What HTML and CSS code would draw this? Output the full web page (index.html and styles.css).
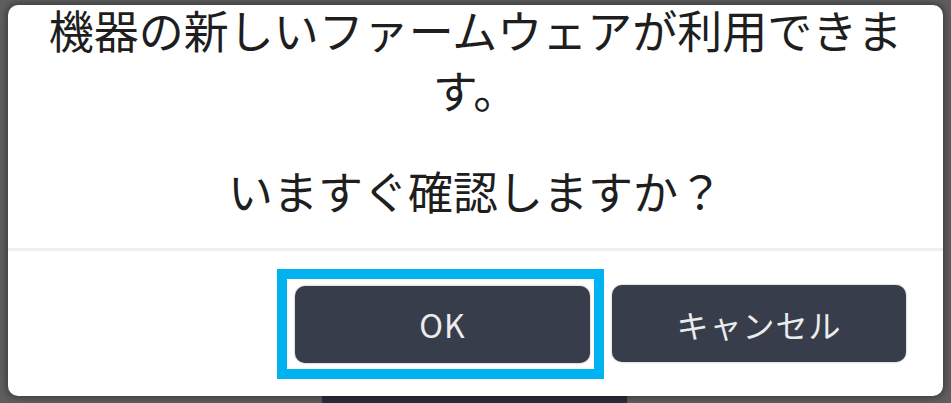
FILE: index.html
```html
<!DOCTYPE html>
<html lang="ja">
<head>
  <meta charset="UTF-8" />
  <meta name="viewport" content="width=device-width, initial-scale=1.0" />
  <title>ファームウェア更新</title>
  <link rel="stylesheet" href="styles.css">
</head>
<body>
  <div class="under"></div>

  <div class="dialog">
    <div class="msg">
      <p>機器の新しいファームウェアが利用できます。</p>
      <p class="ask">いますぐ確認しますか？</p>
    </div>
    <div class="actions">
      <span class="focus"><button class="btn">OK</button></span>
      <button class="btn">キャンセル</button>
    </div>
  </div>
</body>
</html>
```

FILE: styles.css
```css
*{box-sizing:border-box;margin:0;padding:0}
html,body{height:403px}
body{
  font-family:"Noto Sans CJK JP","Noto Sans",sans-serif;
  background:#5e5e5e;overflow:hidden;position:relative;padding-top:5px
}
/* bit of the screen behind the popup */
.under{position:absolute;left:322px;top:380px;width:305px;height:23px;background:#2b2f3a}
.dialog{position:relative;margin:0 8px;height:391px;background:#fff;border-radius:10px;
  box-shadow:0 0 6px 2px rgba(0,0,0,.35);display:flex;flex-direction:column}
.msg{padding:0 20px 27px;text-align:center;color:#1e1e1e;font-size:45px;line-height:60px;
  border-bottom:3px solid #efefef}
.msg p:first-child{margin-top:-5px}
.ask{margin-top:41px}
.actions{flex:1;display:flex;justify-content:flex-end;align-items:center;gap:8px;padding-right:37px}
.focus{display:flex;border:10px solid #00b2ef;padding:7px 4px 6px 8px}
.btn{width:294px;height:77px;border:none;border-radius:10px;background:#383d4c;color:#ececec;
  font-family:inherit;font-size:32px;letter-spacing:1px;cursor:pointer;box-shadow:0 0 2px rgba(0,0,0,.4)}
.focus .btn{width:295px}
```
